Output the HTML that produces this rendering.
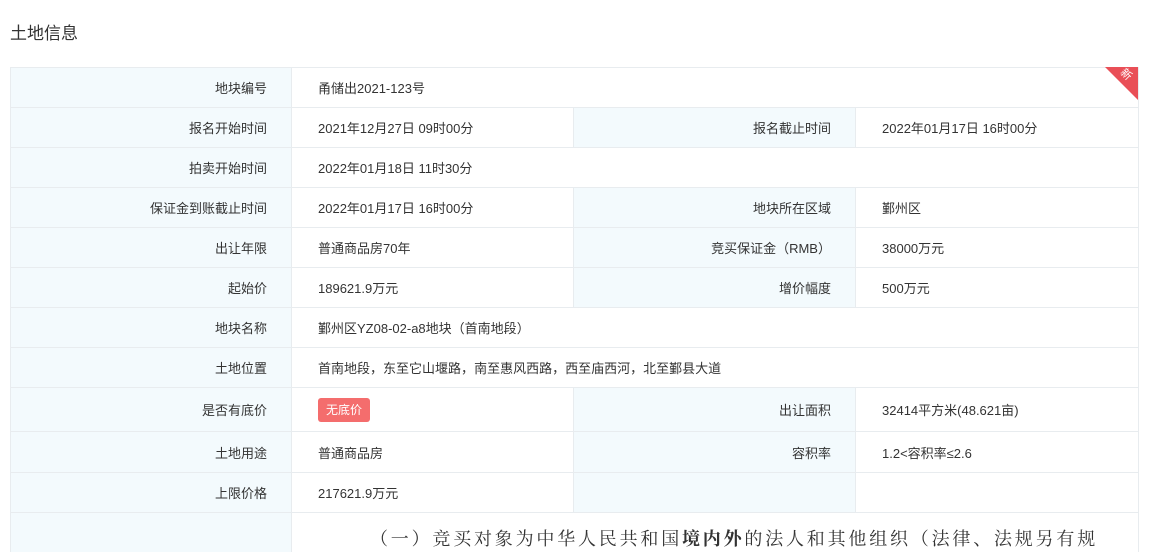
<!DOCTYPE html>
<html><head><meta charset="utf-8"><style>
html,body{margin:0;width:1153px;height:552px;overflow:hidden}
body{background:#fff;font-family:"Liberation Sans","Noto Sans CJK SC",sans-serif;color:#333;position:relative}
h1{position:absolute;left:10px;top:19px;margin:0;font-size:17px;font-weight:normal;color:#333}
table{position:absolute;left:10px;top:67px;width:1128px;border-collapse:collapse;table-layout:fixed;font-size:13px}
td{border:1px solid #e8ecef;height:39px;padding:0;color:#333}
td.l{background:#f3fafd;text-align:right;padding-right:24px}
td.v{padding-left:26px}
.tag{display:inline-block;background:#f46d6d;color:#fff;font-size:12px;border-radius:3px;padding:0 8px;height:24px;line-height:24px}
.corner{position:absolute;left:1105px;top:67px;width:0;height:0;border-left:33px solid transparent;border-top:33px solid #e94f57}
.ct{position:absolute;left:1121px;top:66px;color:#fff;font-size:11px;transform:rotate(45deg)}
.p{font-family:"Liberation Serif","Noto Serif CJK SC",serif;font-size:18px;letter-spacing:2.8px;color:#333;padding-left:78px;white-space:nowrap;overflow:hidden;vertical-align:top;padding-top:12px}
.cn{font-family:"Noto Sans CJK SC",sans-serif}
</style></head><body>
<h1>土地信息</h1>
<table>
<colgroup><col style="width:281px"><col style="width:282px"><col style="width:282px"><col style="width:283px"></colgroup>
<tr><td class="l">地块编号</td><td class="v" colspan="3">甬储出2021-123号</td></tr>
<tr><td class="l">报名开始时间</td><td class="v">2021年12月27日 09时00分</td><td class="l">报名截止时间</td><td class="v">2022年01月17日 16时00分</td></tr>
<tr><td class="l">拍卖开始时间</td><td class="v" colspan="3">2022年01月18日 11时30分</td></tr>
<tr><td class="l">保证金到账截止时间</td><td class="v">2022年01月17日 16时00分</td><td class="l">地块所在区域</td><td class="v">鄞州区</td></tr>
<tr><td class="l">出让年限</td><td class="v">普通商品房70年</td><td class="l">竞买保证金<span class="cn">（</span>RMB<span class="cn">）</span></td><td class="v">38000万元</td></tr>
<tr><td class="l">起始价</td><td class="v">189621.9万元</td><td class="l">增价幅度</td><td class="v">500万元</td></tr>
<tr><td class="l">地块名称</td><td class="v" colspan="3">鄞州区YZ08-02-a8地块<span class="cn">（</span>首南地段<span class="cn">）</span></td></tr>
<tr><td class="l">土地位置</td><td class="v" colspan="3">首南地段<span class="cn">，</span>东至它山堰路<span class="cn">，</span>南至惠风西路<span class="cn">，</span>西至庙西河<span class="cn">，</span>北至鄞县大道</td></tr>
<tr><td class="l" style="height:43px">是否有底价</td><td class="v"><span class="tag">无底价</span></td><td class="l">出让面积</td><td class="v">32414平方米(48.621亩)</td></tr>
<tr><td class="l" style="height:40px">土地用途</td><td class="v">普通商品房</td><td class="l">容积率</td><td class="v">1.2&lt;容积率≤2.6</td></tr>
<tr><td class="l">上限价格</td><td class="v">217621.9万元</td><td class="l"></td><td class="v"></td></tr>
<tr><td class="l" style="height:30px"></td><td class="p" colspan="3">（一）竞买对象为中华人民共和国<b>境内外</b>的法人和其他组织（法律、法规另有规</td></tr>
</table>
<div class="corner"></div><div class="ct">新</div>
</body></html>
